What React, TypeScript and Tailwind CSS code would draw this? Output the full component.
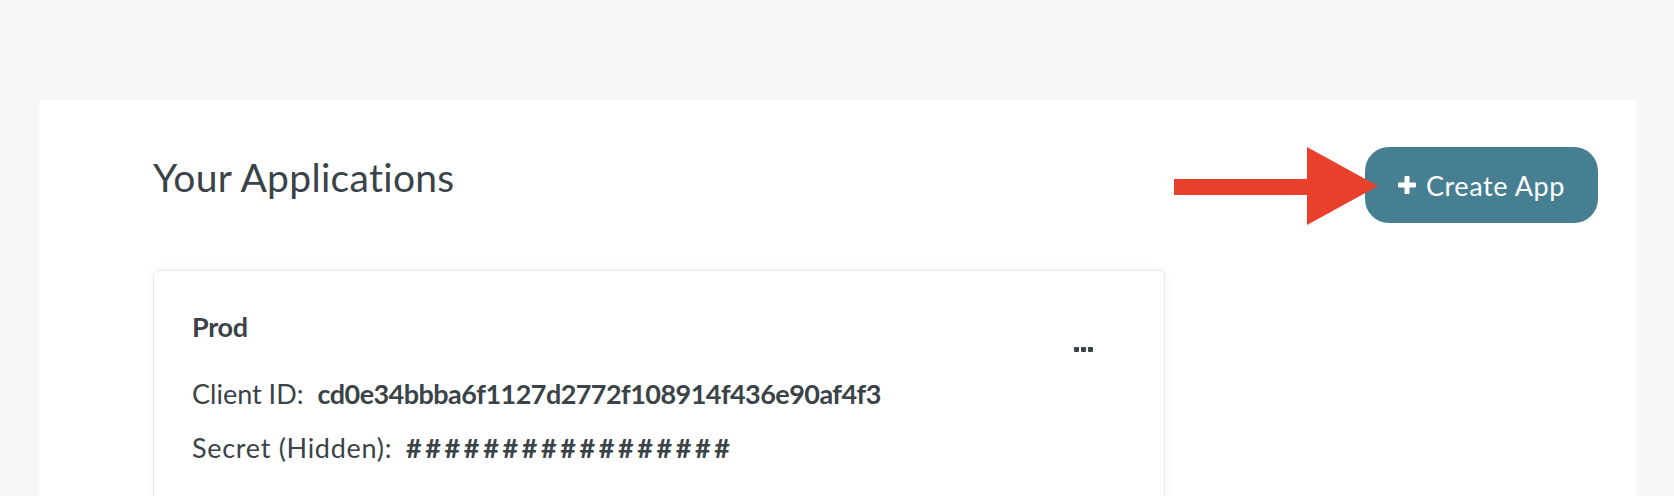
import React from "react";

const apps = [
  {
    name: "Prod",
    clientId: "cd0e34bbba6f1127d2772f108914f436e90af4f3",
    secret: "#################",
  },
];

function PointerArrow() {
  return (
    <svg
      className="absolute left-[1174px] top-[147px]"
      width="204"
      height="78"
      viewBox="0 0 204 78"
    >
      <rect x="0" y="32" width="136" height="16" fill="#e8402a" />
      <polygon points="133,0 204,39 133,78" fill="#e8402a" />
    </svg>
  );
}

export default function App() {
  return (
    <div
      className="relative h-[496px] w-full overflow-hidden bg-[#f6f8f8] pl-[39px] pr-[38px] pt-[100px] text-[#3a4347]"
      style={{ fontFamily: "Lato, 'Open Sans', sans-serif" }}
    >
      <div className="h-[500px] bg-white pl-[114px] pr-[38px] pt-[47px]">
        <div className="flex h-[76px] items-center justify-between">
          <h1 className="mb-[15px] text-[39px] leading-none font-normal tracking-[0.3px]">Your Applications</h1>
          <button className="flex h-[76px] w-[233px] items-center justify-center gap-[10px] rounded-[24px] bg-[#467f92] text-white">
            <svg width="18" height="18" viewBox="0 0 18 18">
              <rect x="6.5" y="0" width="5" height="18" rx="1" fill="#fff" />
              <rect x="0" y="6.5" width="18" height="5" rx="1" fill="#fff" />
            </svg>
            <span className="text-[27px] leading-none font-normal tracking-[0.6px]">Create App</span>
          </button>
        </div>

        <div className="mt-[47px] w-[1012px]">
          {apps.map((app) => (
            <div
              key={app.name}
              className="flex h-[260px] rounded-[6px] border border-[#e9e9e9] bg-white pl-[38px] pr-[71px] pt-[40px] shadow-[0_0_12px_rgba(0,0,0,0.05)]"
            >
              <div className="flex-1 text-[27px] leading-[32px]">
                <div className="font-bold tracking-[-0.3px]">{app.name}</div>
                <div className="mt-[35px] flex">
                  <span className="tracking-[0px]">Client ID:</span>
                  <span className="ml-[14px] font-bold tracking-[-0.55px]">{app.clientId}</span>
                </div>
                <div className="mt-[22px] flex">
                  <span className="tracking-[0.7px]">Secret (Hidden):</span>
                  <span className="ml-[14px] font-bold tracking-[3.6px]">{app.secret}</span>
                </div>
              </div>
              <div className="mt-[36px] flex h-[5px] gap-[2px]">
                <span className="h-[5px] w-[5px] rounded-[1px] bg-[#3a4347]" />
                <span className="h-[5px] w-[5px] rounded-[1px] bg-[#3a4347]" />
                <span className="h-[5px] w-[5px] rounded-[1px] bg-[#3a4347]" />
              </div>
            </div>
          ))}
        </div>
      </div>
      <PointerArrow />
    </div>
  );
}
